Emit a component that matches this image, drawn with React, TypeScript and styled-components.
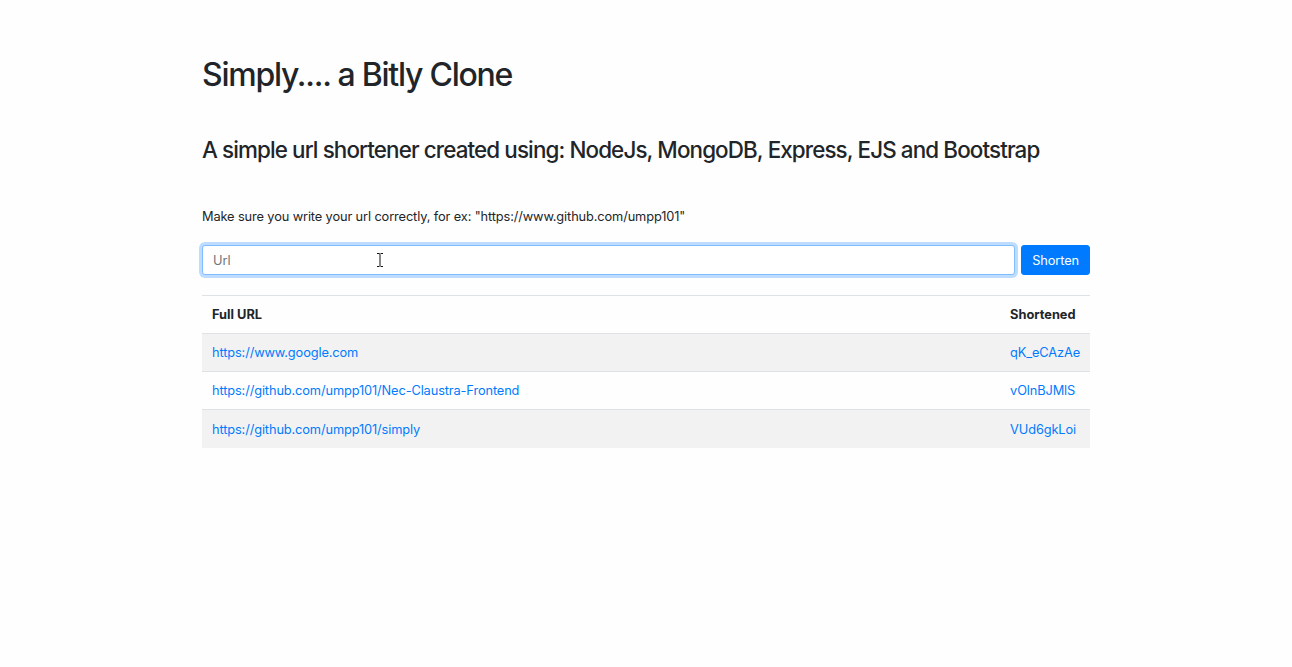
import React from "react";
import styled, { createGlobalStyle } from "styled-components";

const Global = createGlobalStyle`
  html, body { margin: 0; padding: 0; background: #fefefe; }
  body { font-family: Inter, "Noto Sans", "Liberation Sans", sans-serif; color: #212529; }
  * { box-sizing: border-box; }
`;

const Container = styled.main`
  width: 888px;
  margin: 0 auto;
  padding-top: 56px;
  display: flex;
  flex-direction: column;
`;

const Title = styled.h1`
  margin: 0 0 43px;
  font-size: 32px;
  font-weight: 500;
  line-height: 1.2;
  letter-spacing: -1.25px;
`;

const Subtitle = styled.h3`
  margin: 0 0 43px;
  font-size: 22.4px;
  font-weight: 500;
  line-height: 1.2;
  letter-spacing: -0.88px;
  white-space: nowrap;
`;

const Hint = styled.p`
  margin: 0 0 19px;
  font-size: 12.8px;
  line-height: 1.5;
  letter-spacing: -0.12px;
`;

const Form = styled.form`
  position: relative;
  display: flex;
  gap: 6px;
  margin-bottom: 20px;
`;

const Input = styled.input`
  flex: 1;
  height: 30px;
  padding: 0 10px;
  font: inherit;
  font-size: 12.8px;
  color: #495057;
  border: 1px solid #80bdff;
  border-radius: 3px;
  box-shadow: 0 0 0 3px rgba(0, 123, 255, 0.25);
  outline: none;
  background: #fff;
  &::placeholder { color: #6c757d; }
`;

const Cursor = styled.svg`
  position: absolute;
  left: 174px;
  top: 7px;
  pointer-events: none;
`;

const Button = styled.button`
  height: 30px;
  padding: 0 10px;
  font: inherit;
  font-size: 12.8px;
  letter-spacing: -0.1px;
  color: #fff;
  background: #007bff;
  border: 1px solid #007bff;
  border-radius: 3px;
`;

const Table = styled.table`
  width: 100%;
  border-collapse: collapse;
  font-size: 12.8px;
  letter-spacing: -0.12px;
`;

const Th = styled.th<{ $shrink?: boolean }>`
  text-align: left;
  font-weight: 700;
  padding: 0 10px;
  height: 38px;
  width: ${(p) => (p.$shrink ? "1px" : "auto")};
  letter-spacing: 0;
  border-top: 1px solid #dee2e6;
  border-bottom: 1px solid #dee2e6;
`;

const Row = styled.tr<{ $striped: boolean }>`
  background: ${(p) => (p.$striped ? "#f2f2f2" : "transparent")};
`;

const Td = styled.td`
  padding: 0 10px;
  height: 38px;
  border-top: 1px solid #dee2e6;
`;

const LinkA = styled.a`
  color: #007bff;
  text-decoration: none;
`;

const rows = [
  ["https://www.google.com", "qK_eCAzAe"],
  ["https://github.com/umpp101/Nec-Claustra-Frontend", "vOlnBJMlS"],
  ["https://github.com/umpp101/simply", "VUd6gkLoi"],
];

export default function App() {
  return (
    <>
      <Global />
      <Container>
        <Title>Simply.... a Bitly Clone</Title>
        <Subtitle>A simple url shortener created using: NodeJs, MongoDB, Express, EJS and Bootstrap</Subtitle>
        <Hint>Make sure you write your url correctly, for ex: "https://www.github.com/umpp101"</Hint>
        <Form onSubmit={(e) => e.preventDefault()}>
          <Input placeholder="Url" />
          <Cursor width="8" height="16" viewBox="0 0 8 16">
            <path d="M1 1.5h2.2L4 2.3l.8-.8H7M4 2.3v11.4M1 14.5h2.2l.8-.8.8.8H7" fill="none" stroke="#fff" strokeWidth="2.4" />
            <path d="M1 1.5h2.2L4 2.3l.8-.8H7M4 2.3v11.4M1 14.5h2.2l.8-.8.8.8H7" fill="none" stroke="#111" strokeWidth="1" />
          </Cursor>
          <Button type="submit">Shorten</Button>
        </Form>
        <Table>
          <thead>
            <tr>
              <Th>Full URL</Th>
              <Th $shrink>Shortened</Th>
            </tr>
          </thead>
          <tbody>
            {rows.map(([full, short], i) => (
              <Row key={short} $striped={i % 2 === 0}>
                <Td>
                  <LinkA href="#">{full}</LinkA>
                </Td>
                <Td>
                  <LinkA href="#">{short}</LinkA>
                </Td>
              </Row>
            ))}
          </tbody>
        </Table>
      </Container>
    </>
  );
}
